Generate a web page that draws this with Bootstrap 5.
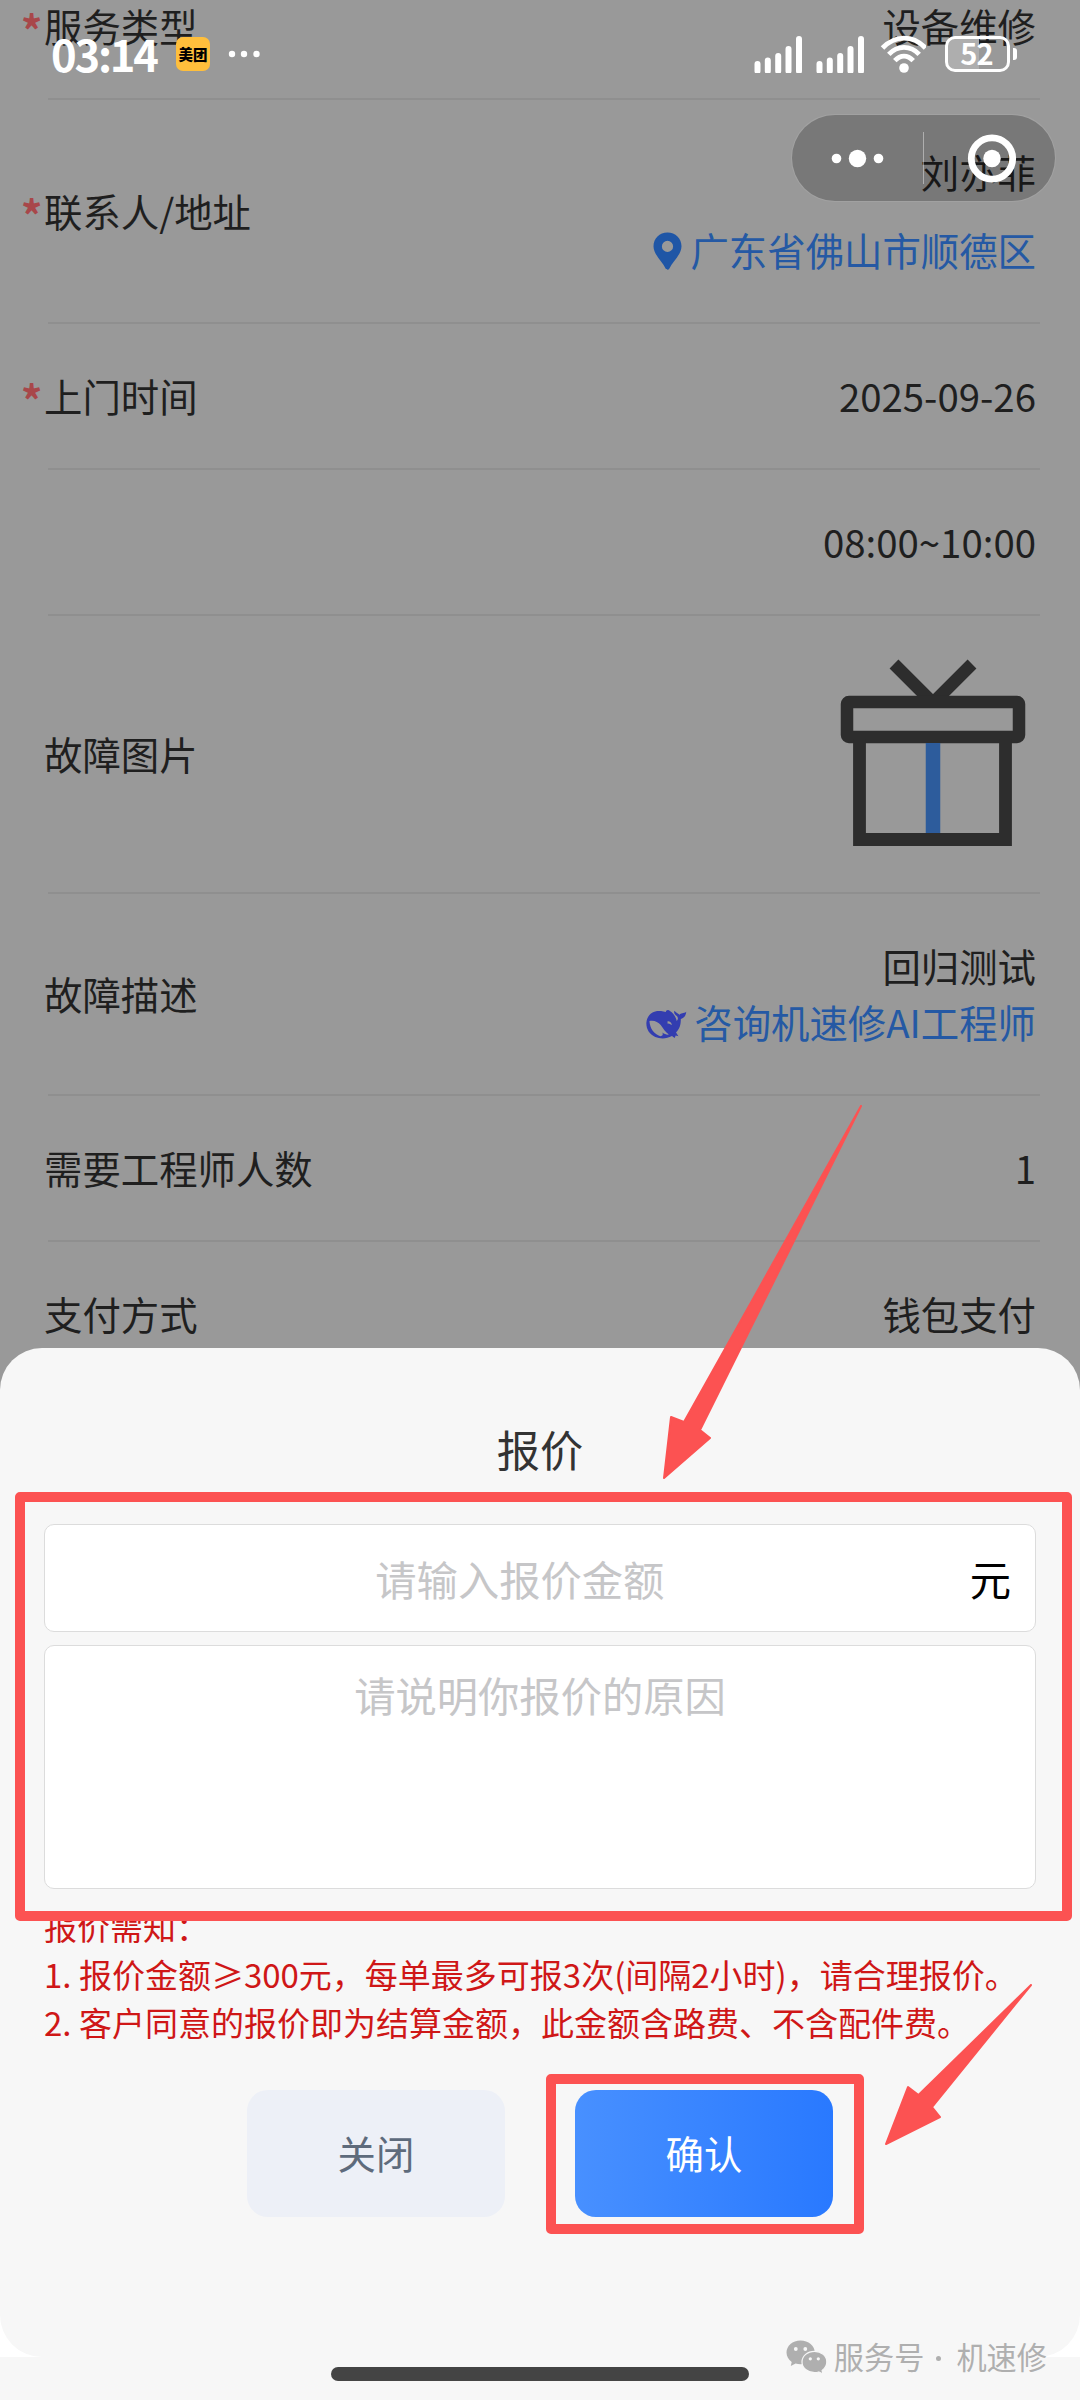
<!DOCTYPE html>
<html lang="zh-CN">
<head>
<meta charset="utf-8">
<meta name="viewport" content="width=device-width, initial-scale=1">
<title>报价</title>
<link rel="stylesheet" href="https://cdn.jsdelivr.net/npm/bootstrap@5.3.0/dist/css/bootstrap.min.css">
<style>
  body { font-family: "Noto Sans CJK SC", "Noto Sans", sans-serif; background: #f7f7f7; }
  svg { display: block; flex: none; }
  .phone { width: 1080px; height: 2400px; background: #f7f7f7; }
  .order-page { height: 1500px; background: #999; }
  .order-list { margin-top: -46px; padding: 0 40px 0 45px; font-size: 38.4px; line-height: 56px; color: #1f1f1f; }
  .order-item { min-height: 146px; padding-right: 4px; padding-bottom: 3px; margin-left: 3px; border-bottom: 2px solid #8f8f8f; }
  .order-item .name { margin-left: -4px; }
  .order-item .required { display: flex; }
  .order-item .required::before { content: "*"; width: 23px; height: 56px; margin-left: -23px; color: #a8474a; font-weight: 700; font-size: 42px; line-height: 64px; }
  .h-contact { height: 224px; }
  .h-photo { height: 278px; }
  .h-desc { height: 202px; }
  .two-line { line-height: 78px; }
  .blue { color: #2559a4; }
  .pin { margin: 4px 8px 0 0; }
  .whale { margin: 7px 7px 0 0; }

  .status { top: 35px; left: 0; right: 0; height: 38px; padding: 0 63px 0 51px; color: #fff; }
  .clock { font-size: 43.5px; line-height: 37px; font-weight: 700; letter-spacing: -2.2px; width: 125px; padding-bottom: 2px; }
  .app-badge { width: 34px; height: 34px; border-radius: 7px; background: #ffbf3c; color: #000; font-size: 14.5px; font-weight: 900; line-height: 34px; }
  .battery { width: 65px; height: 36px; margin-left: 19px; border: 3px solid #fff; border-radius: 10px; font-size: 29px; font-weight: 700; line-height: 27px; letter-spacing: -.8px; padding-right: 2px;
    background: linear-gradient(90deg, #aeaeae 52%, transparent 52%); }
  .battery-tip { width: 4px; height: 12px; border-radius: 0 3px 3px 0; background: #fff; margin-left: 3px; }

  .capsule { left: 791px; top: 114px; width: 265px; height: 88px; border-radius: 44px; background: rgba(0,0,0,.21); border: 1px solid rgba(255,255,255,.3); }

  .sheet-back { left: 0; right: 0; top: 2300px; height: 57px; background: #fff; }
  .sheet { left: 0; right: 0; top: 1348px; height: 1009px; border-radius: 42px; background: #f7f7f7; padding: 68px 44px 0; }
  .sheet-title { font-size: 43.2px; line-height: 64px; color: #333; margin-bottom: 44px; }
  .field { border: 1px solid #dcdcdc; border-radius: 10px; background: #fff; font-size: 41.3px; width: 992px; }
  .field input, .field textarea { border: 0; background: none; outline: 0; padding: 0; text-align: center; font: inherit; resize: none; box-shadow: none; min-width: 0; }
  .field ::placeholder { color: #c6c6c8; opacity: 1; }
  .amount { height: 108px; padding: 2px 24px 0 25px; }
  .amount .unit { color: #000; }
  .reason { height: 244px; margin-top: 13px; padding-top: 17px; }
  .reason textarea { line-height: 62px; }
  .notice { margin-top: 13px; font-size: 33px; line-height: 48px; color: #cf1717; white-space: nowrap; }
  .actions { gap: 70px; margin-top: 44px; }
  .actions .btn { width: 258px; height: 127px; border-radius: 21px; font-size: 38.4px; border: 0; padding-top: 5px; }
  .btn-close-sheet, .btn-close-sheet:hover { background: #edf0f7; color: #5e6b7c; }
  .btn-confirm, .btn-confirm:hover { background: linear-gradient(90deg, #4890ff, #2979ff); color: #fff; }

  .home-bar { left: 331px; top: 2367px; width: 418px; height: 14px; border-radius: 7px; background: #444; }
  .account { right: 33px; top: 2335px; height: 44px; font-size: 30.2px; color: #afafaf; }
  .account .sep { width: 32px; }
  .account .sep::before { content: ""; display: block; width: 5px; height: 5px; margin: 3px auto 0 12px; border-radius: 50%; background: #afafaf; }
  .account svg { margin-right: 7px; }
  .callouts { left: 0; top: 0; pointer-events: none; }
</style>
<script src="https://cdn.jsdelivr.net/npm/bootstrap@5.3.0/dist/js/bootstrap.bundle.min.js"></script>
</head>
<body>
<div class="phone position-relative overflow-hidden">

  <main class="order-page overflow-hidden">
    <div class="order-list">
      <div class="order-item d-flex align-items-center justify-content-between"><span class="name required">服务类型</span><span>设备维修</span></div>
      <div class="order-item h-contact d-flex align-items-center justify-content-between">
        <span class="name required">联系人/地址</span>
        <div class="two-line text-end">
          <div>刘亦菲</div>
          <div class="blue d-flex align-items-center">
            <svg class="pin" width="29" height="38" viewBox="0 0 29 38"><path fill="#1f56a6" fill-rule="evenodd" d="M14.500 .5C6.500 .5.5 6.500.5 14.200.5 22.500 9 29 12.600 36.500c.8 1.600 3 1.600 3.800 0C20 29 28.500 22.500 28.500 14.200 28.500 6.500 22.500.5 14.500.5Zm0 8.300a5.600 5.600 0 1 1 0 11.200 5.600 5.600 0 0 1 0-11.200Z"/></svg>
            <span>广东省佛山市顺德区</span>
          </div>
        </div>
      </div>
      <div class="order-item d-flex align-items-center justify-content-between"><span class="name required">上门时间</span><span>2025-09-26</span></div>
      <div class="order-item d-flex align-items-center justify-content-end"><span>08:00~10:00</span></div>
      <div class="order-item h-photo d-flex align-items-center justify-content-between">
        <span class="name">故障图片</span>
        <svg width="196" height="188" viewBox="0 0 196 188" fill="none" stroke="#2d2d2d">
          <path d="M54 5 93 44M132 5 93 44" stroke-width="12.500"/>
          <rect x="7" y="43" width="172" height="35" rx="2" stroke-width="12.500"/>
          <path d="M19.500 80v100.500h146V80" stroke-width="12.800"/>
          <path d="M93 84v90" stroke="#2d5c9c" stroke-width="14.500"/>
        </svg>
      </div>
      <div class="order-item h-desc d-flex align-items-center justify-content-between">
        <span class="name">故障描述</span>
        <div class="text-end">
          <div>回归测试</div>
          <div class="blue d-flex align-items-center">
            <svg class="whale" width="41" height="30" viewBox="0 0 120 88">
              <path fill="#333db0" d="M1 40C3 16 22 3 44 6L58 9C58 3 66 1 70 6C80 12 88 24 90 35C94 30 95 27 91 21C84 17 81 12 83 5C90 12 95 13 98 17C102 11 110 14 118 8C117 20 111 27 102 29C102 46 99 57 88 69L95 80 87 78 84 85 76 79C60 88 42 88 27 82C9 74 0 58 1 40Z"/>
              <path fill="#999" d="M10 35C24 32 35 38 43 47C50 56 57 69 67 75C61 76 54 74 48 69C51 76 48 79 42 80C24 73 11 58 10 35ZM63 36C69 35 75 40 76 47C70 46 69 42 63 43Z"/>
            </svg>
            <span>咨询机速修AI工程师</span>
          </div>
        </div>
      </div>
      <div class="order-item d-flex align-items-center justify-content-between"><span class="name">需要工程师人数</span><span>1</span></div>
      <div class="order-item d-flex align-items-center justify-content-between"><span class="name">支付方式</span><span>钱包支付</span></div>
    </div>
  </main>

  <header class="status position-absolute d-flex align-items-center">
    <span class="clock">03:14</span>
    <span class="app-badge text-center">美团</span>
    <svg class="ms-3" width="36" height="8" viewBox="0 0 36 8" fill="#fff"><circle cx="6" cy="4" r="3.200"/><circle cx="18" cy="4" r="3.200"/><circle cx="30.500" cy="4" r="3.200"/></svg>
    <div class="d-flex align-items-center ms-auto">
      <svg width="172" height="38" viewBox="0 0 172 38" fill="none" stroke="#fff" stroke-linecap="round">
        <g stroke-width="6"><path d="M3.500 29v7M13.800 25.500V36M24.200 21V36M34.500 14V36M45 4V36"/><path d="M65.500 29v7M75.800 25.500V36M86.200 21V36M96.500 14V36M107 4V36"/></g>
        <g stroke-width="4.800" stroke-linecap="butt"><path d="M128.500 13C141 -.3 159 -.3 171.500 13"/><path d="M134.800 19.300C143.500 10 156.500 10 165.200 19.300"/><path d="M140.800 25.700C146.500 19.500 153.500 19.500 159.200 25.700"/></g>
        <circle cx="150" cy="33" r="4.800" fill="#fff" stroke="none"/>
      </svg>
      <div class="battery text-center">52</div>
      <div class="battery-tip"></div>
    </div>
  </header>

  <div class="capsule position-absolute">
    <svg width="263" height="86" viewBox="792 115 263 86" fill="#fff">
      <circle cx="836.500" cy="158.500" r="4.800"/><circle cx="857.500" cy="158.500" r="8.700"/><circle cx="878.500" cy="158.500" r="4.800"/>
      <path d="M923 132h1v52h-1z" opacity=".4"/>
      <circle cx="992" cy="158.500" r="20.700" fill="none" stroke="#fff" stroke-width="6.800"/><circle cx="992" cy="158.500" r="8.700"/>
    </svg>
  </div>

  <div class="sheet-back position-absolute"></div>
  <section class="sheet position-absolute">
    <h1 class="sheet-title text-center fw-normal">报价</h1>
    <div class="field amount d-flex align-items-center">
      <input class="flex-grow-1" type="text" placeholder="请输入报价金额"><span class="unit">元</span>
    </div>
    <div class="field reason"><textarea class="w-100 h-100 d-block" placeholder="请说明你报价的原因"></textarea></div>
    <div class="notice">
      <div>报价需知：</div>
      <div>1. 报价金额≥300元，每单最多可报3次(间隔2小时)，请合理报价。</div>
      <div>2. 客户同意的报价即为结算金额，此金额含路费、不含配件费。</div>
    </div>
    <div class="actions d-flex justify-content-center">
      <button class="btn btn-close-sheet">关闭</button>
      <button class="btn btn-confirm">确认</button>
    </div>
  </section>

  <div class="home-bar position-absolute"></div>
  <div class="account position-absolute d-flex align-items-center">
    <svg width="41" height="34" viewBox="0 0 41 34">
      <path fill="#afafaf" d="M14.500 .5C6.500.5.5 6 .5 12.600c0 3.900 2 7.200 5.200 9.400L4.800 26l4.800-2.500c1.600.5 3.200.8 4.900.8 8 0 14.300-5.100 14.300-11.800S22.500.5 14.500.5Z"/>
      <path fill="#afafaf" stroke="#f7f7f7" stroke-width="1.200" d="M28.500 11.300c-7 0-12.500 4.700-12.500 10.700s5.500 10.600 12.500 10.600c1.500 0 2.900-.2 4.200-.6l4.300 2-.9-3.600c2.900-2 4.700-5 4.700-8.400 0-6-5.400-10.700-12.300-10.700Z"/>
      <g fill="#f7f7f7"><circle cx="9.800" cy="9" r="1.900"/><circle cx="19.300" cy="9" r="1.900"/><circle cx="24.300" cy="18.800" r="1.600"/><circle cx="32.300" cy="18.800" r="1.600"/></g>
    </svg>
    <span>服务号</span><span class="sep"></span><span>机速修</span>
  </div>

  <svg class="callouts position-absolute" width="1080" height="2400" viewBox="0 0 1080 2400">
    <g fill="none" stroke="#fc5252" stroke-width="10" stroke-linejoin="round">
      <rect x="20" y="1497" width="1047" height="419"/>
      <rect x="551" y="2079" width="308" height="150"/>
    </g>
    <g fill="#fc5252" stroke="#fc5252" stroke-width="2" stroke-linejoin="round">
      <path d="M861 1106 684 1422 671 1417 664 1478 710 1438 700 1430Z"/>
      <path d="M1031 1985 918.500 2095 908 2087 886 2144 940 2117 932 2107Z"/>
    </g>
  </svg>
</div>
</body>
</html>
